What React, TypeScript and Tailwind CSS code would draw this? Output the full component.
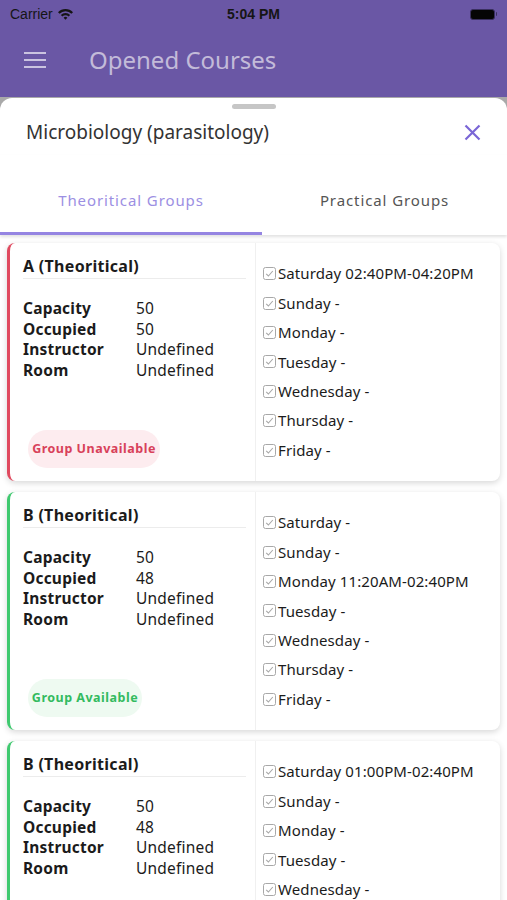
import React from "react"

type Group = {
  name: string
  capacity: number
  occupied: number
  available: boolean
  days: string[]
}

const groups: Group[] = [
  {
    name: "A (Theoritical)",
    capacity: 50,
    occupied: 50,
    available: false,
    days: [
      "Saturday 02:40PM-04:20PM",
      "Sunday -",
      "Monday -",
      "Tuesday -",
      "Wednesday -",
      "Thursday -",
      "Friday -",
    ],
  },
  {
    name: "B (Theoritical)",
    capacity: 50,
    occupied: 48,
    available: true,
    days: [
      "Saturday -",
      "Sunday -",
      "Monday 11:20AM-02:40PM",
      "Tuesday -",
      "Wednesday -",
      "Thursday -",
      "Friday -",
    ],
  },
  {
    name: "B (Theoritical)",
    capacity: 50,
    occupied: 48,
    available: true,
    days: [
      "Saturday 01:00PM-02:40PM",
      "Sunday -",
      "Monday -",
      "Tuesday -",
      "Wednesday -",
      "Thursday -",
      "Friday -",
    ],
  },
]

function CheckBox() {
  return (
    <svg width="13" height="13" viewBox="0 0 13 13" className="shrink-0">
      <rect x="0.5" y="0.5" width="12" height="12" rx="2" fill="none" stroke="#a8a8a8" strokeWidth="1" />
      <path d="M3.2 6.8 L5.4 9 L9.8 4" fill="none" stroke="#a8a8a8" strokeWidth="1.1" />
    </svg>
  )
}

function GroupCard({ group }: { group: Group }) {
  return (
    <div
      className={`flex h-[238px] rounded-lg bg-white border-l-[3px] shadow-[0_2px_6px_rgba(0,0,0,0.16)] ${
        group.available ? "border-l-[#3fc96f]" : "border-l-[#e04a5f]"
      }`}
    >
      {/* info column */}
      <div className="flex w-[246px] flex-col justify-between pl-[13px] pr-[9px] pt-[13px] pb-[13px] border-r border-[#f0f0f0]">
        <div>
          <div className="border-b border-[#ececec] pb-[2px] text-[16px] font-bold leading-[20px] tracking-[0.3px] text-[#1b1b1b]">
            {group.name}
          </div>
          <div className="mt-[19px] grid grid-cols-[113px_1fr] text-[15.5px] leading-[20.5px] tracking-[0.2px] text-[#1b1b1b]">
            <span className="font-bold">Capacity</span>
            <span>{group.capacity}</span>
            <span className="font-bold">Occupied</span>
            <span>{group.occupied}</span>
            <span className="font-bold">Instructor</span>
            <span>Undefined</span>
            <span className="font-bold">Room</span>
            <span>Undefined</span>
          </div>
        </div>
        {group.available ? (
          <div className="ml-[5px] flex h-[38px] w-[114px] items-center justify-center rounded-full bg-[#eefaf1] text-[12.5px] font-bold tracking-[0.5px] text-[#33bb5f]">
            Group Available
          </div>
        ) : (
          <div className="ml-[5px] flex h-[38px] w-[132px] items-center justify-center rounded-full bg-[#fdecef] text-[12.5px] font-bold tracking-[0.5px] text-[#d8415a]">
            Group Unavailable
          </div>
        )}
      </div>
      {/* schedule column */}
      <div className="flex-1 pl-[7px] pt-[16px]">
        {group.days.map((d, i) => (
          <div key={i} className="flex h-[29.4px] items-center gap-[2px] text-[15px] tracking-[0.1px] text-[#1b1b1b]">
            <CheckBox />
            <span>{d}</span>
          </div>
        ))}
      </div>
    </div>
  )
}

export default function App() {
  return (
    <div
      className="relative flex h-[900px] w-[507px] flex-col overflow-hidden bg-[#a9a9a9]"
      style={{ fontFamily: '"Noto Sans", "Open Sans", sans-serif' }}
    >
      {/* status bar */}
      <div className="flex h-[28px] shrink-0 items-center justify-between bg-[#6a57a5] px-[10px] text-[14px] text-[#151515]">
        <div className="flex items-center gap-[4px]" style={{ fontFamily: '"Liberation Sans", sans-serif' }}>
          <span>Carrier</span>
          <svg width="17" height="12" viewBox="0 0 17 12">
            <path d="M1 4.2 A10.5 10.5 0 0 1 16 4.2 L14.4 5.8 A8.2 8.2 0 0 0 2.6 5.8 Z" fill="#151515" />
            <path d="M3.8 7 A6.6 6.6 0 0 1 13.2 7 L11.6 8.6 A4.3 4.3 0 0 0 5.4 8.6 Z" fill="#151515" />
            <path d="M6.6 9.8 A2.7 2.7 0 0 1 10.4 9.8 L8.5 11.8 Z" fill="#151515" />
          </svg>
        </div>
        <span className="absolute left-1/2 -translate-x-1/2 font-bold" style={{ fontFamily: '"Liberation Sans", sans-serif' }}>
          5:04 PM
        </span>
        <div className="flex items-center">
          <div className="h-[11px] w-[25px] rounded-[3px] border border-[#3a3060] bg-[#050505]" />
          <div className="ml-[1px] h-[4px] w-[1.5px] rounded-r bg-[#3a3060]" />
        </div>
      </div>

      {/* app bar */}
      <div className="flex h-[69px] shrink-0 items-center bg-[#6a57a5] pb-[6px]">
        <div className="ml-[24px] flex w-[22px] flex-col gap-[5px]">
          <div className="h-[2px] bg-[#cbc3e0]" />
          <div className="h-[2px] bg-[#cbc3e0]" />
          <div className="h-[2px] bg-[#cbc3e0]" />
        </div>
        <span className="ml-[43px] text-[24px] text-[#c3bbd9]">Opened Courses</span>
      </div>

      {/* sheet */}
      <div className="mt-[1px] flex flex-1 flex-col rounded-t-[12px] bg-white">
        <div className="flex justify-center pt-[6px]">
          <div className="h-[5px] w-[44px] rounded-full bg-[#c6c6c6]" />
        </div>
        <div className="flex h-[46px] items-center justify-between pl-[26px] pr-[26px]">
          <span className="text-[19px] text-[#333333]">Microbiology (parasitology)</span>
          <svg width="17" height="17" viewBox="0 0 17 17">
            <path d="M1.5 1.5 L15.5 15.5 M15.5 1.5 L1.5 15.5" stroke="#7a66d6" strokeWidth="2.2" />
          </svg>
        </div>
        <div className="flex h-[80px] shadow-[0_2px_3px_rgba(0,0,0,0.12)]">
          <div className="flex w-[262px] items-center justify-center border-b-[3px] border-[#9585e2] pt-[14px] text-[15px] tracking-[0.9px] text-[#9c8fe3]">
            Theoritical Groups
          </div>
          <div className="flex flex-1 items-center justify-center border-b-[3px] border-transparent pt-[14px] text-[15px] tracking-[0.9px] text-[#555555]">
            Practical Groups
          </div>
        </div>
        <div className="flex flex-col gap-[11px] px-[7px] pt-[8px]">
          {groups.map((g, i) => (
            <GroupCard key={i} group={g} />
          ))}
        </div>
      </div>
    </div>
  )
}
